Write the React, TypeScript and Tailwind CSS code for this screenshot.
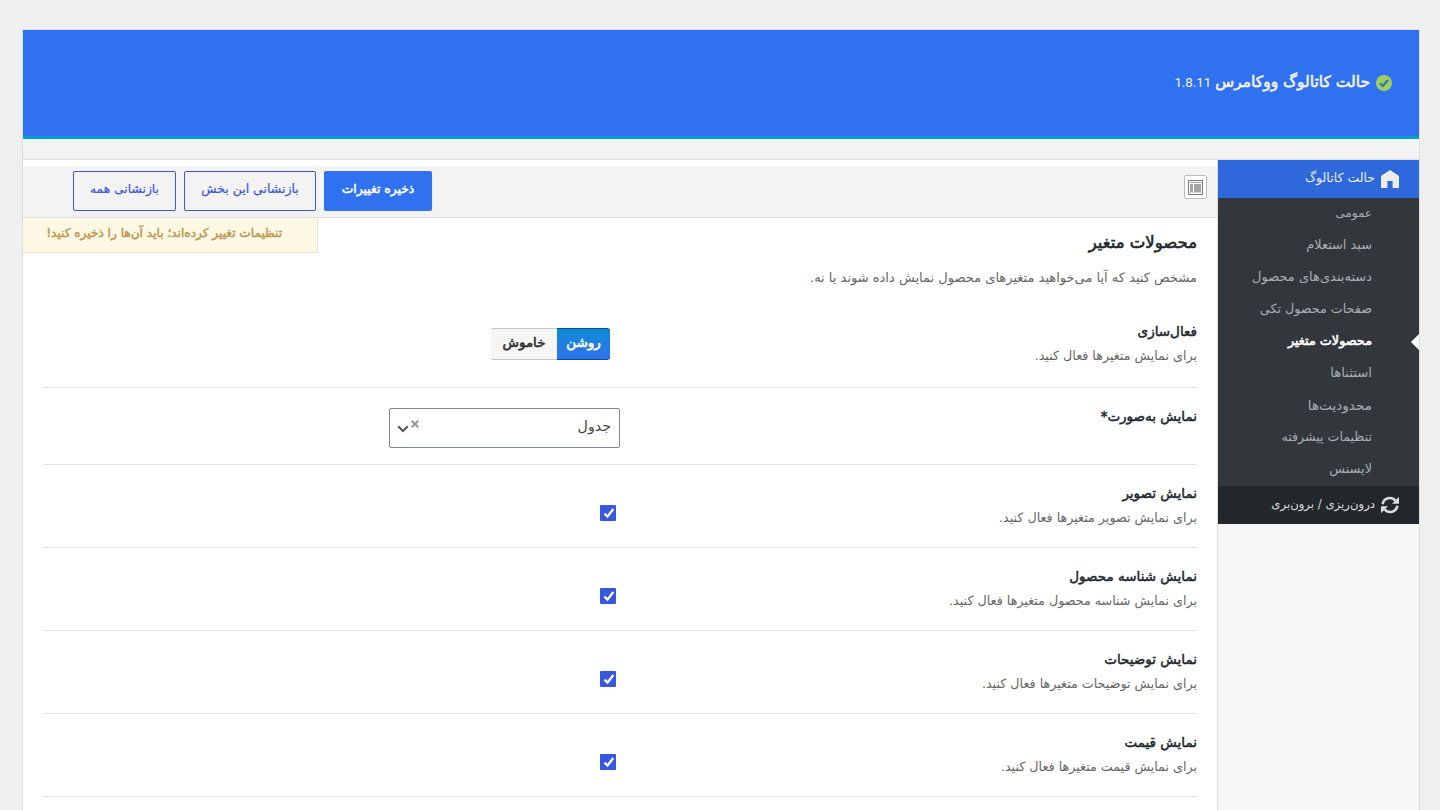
import type { ReactNode } from 'react';

const menu = [
  { label: 'عمومی', size: 'text-[12px]' },
  { label: 'سبد استعلام', size: 'text-[12.9px]' },
  { label: 'دسته‌بندی‌های محصول', size: 'text-[13px]' },
  { label: 'صفحات محصول تکی', size: 'text-[12.7px]' },
  { label: 'محصولات متغیر', size: 'text-[12.8px]', active: true },
  { label: 'استثناها', size: 'text-[13.2px]' },
  { label: 'محدودیت‌ها', size: 'text-[13.6px]' },
  { label: 'تنظیمات پیشرفته', size: 'text-[12.6px]' },
  { label: 'لایسنس', size: 'text-[12.9px]' },
];

const checks = [
  { title: 'نمایش تصویر', desc: 'برای نمایش تصویر متغیرها فعال کنید.' },
  { title: 'نمایش شناسه محصول', desc: 'برای نمایش شناسه محصول متغیرها فعال کنید.' },
  { title: 'نمایش توضیحات', desc: 'برای نمایش توضیحات متغیرها فعال کنید.' },
  { title: 'نمایش قیمت', desc: 'برای نمایش قیمت متغیرها فعال کنید.' },
];

function Row({ title, desc, height, children }: {
  title: string;
  desc?: string;
  height: string;
  children: ReactNode;
}) {
  return (
    <div className={`flex border-b border-[#e3e3e3] ${height}`}>
      <div className="w-[577px] shrink-0 pt-[16px]">
        <h3 className="text-[13.5px] leading-[25px] text-[#23282d] [-webkit-text-stroke:0.5px]">{title}</h3>
        {desc && (
          <p className="text-[12.7px] leading-[24px] text-[#666]">{desc}</p>
        )}
      </div>
      <div className="flex-1">{children}</div>
    </div>
  );
}

export default function App() {
  return (
    <div
      dir="rtl"
      className="h-[810px] overflow-hidden bg-[#efefef] px-[20px] pt-[29px] font-['DejaVu_Sans',sans-serif] whitespace-nowrap"
    >
      <div className="mr-0 ml-[2px] h-[900px] border border-[#dedede] bg-[#f3f3f3]">

        {/* HEADER */}
        <header className="flex h-[109px] items-start border-b-[3px] border-[#00a0d2] bg-[#3071ef] pt-[40px] pr-[27px]">
          <svg className="mt-[5px] size-4 shrink-0" viewBox="0 0 16 16">
            <circle cx="8" cy="8" r="8" fill="#a0cf5b" />
            <path d="M4 8.300l2.800 2.700L12 5" fill="none" stroke="#2f6fc0" strokeWidth="2.200" />
          </svg>
          <h1 className="mr-[6px] text-[15.5px] leading-[25px] text-[#f1f1f1] [-webkit-text-stroke:0.6px]">
            حالت کاتالوگ ووکامرس
          </h1>
          <span className="mr-[4px] font-['Roboto',sans-serif] text-[13.3px] leading-[26px] text-[#f1f1f1]">
            1.8.11
          </span>
        </header>

        <div className="h-[21px] border-b border-[#dedede]" />

        <div className="flex h-[770px]">

          {/* SIDEBAR */}
          <aside className="w-[201px] shrink-0 bg-[#f7f7f7]">
            <div className="flex h-[38px] items-center bg-[#2e68da] pr-[20px] text-[#ececec]">
              <svg className="size-[18px]" viewBox="0 0 18 18" fill="#ececec">
                <path d="M9 0L18 6V18H11.600V11H6.400V18H0V6Z" />
              </svg>
              <span className="mr-[6px] pb-[2px] text-[12.5px] leading-[20px]">حالت کاتالوگ</span>
            </div>
            <ul className="h-[288px] bg-[#32373c] text-[#a9adb2]">
              {menu.map((item) => (
                <li
                  key={item.label}
                  className={`relative h-[32px] pr-[47px] leading-[30px] ${item.size} ${item.active ? 'text-white [-webkit-text-stroke:0.6px]' : ''}`}
                >
                  {item.label}
                  {item.active && (
                    <span className="absolute top-[8px] right-0 border-y-8 border-r-8 border-y-transparent border-r-white" />
                  )}
                </li>
              ))}
            </ul>
            <div className="flex h-[38px] items-center bg-[#23282d] pr-[20px] text-[#dcdcdc]">
              <svg className="size-[18px]" viewBox="0 0 18 18" fill="none" stroke="#dcdcdc" strokeWidth="2.5">
                <path d="M1.6 8.2A7.2 7.2 0 0 1 14.4 4.8M16.4 9.8A7.2 7.2 0 0 1 3.6 13.2" />
                <path d="M18 0.8V7.8H11ZM0 17.2V10.2H7Z" fill="#dcdcdc" stroke="none" />
              </svg>
              <span className="mr-[6px] pb-[2px] text-[11.7px] leading-[20px]">درون‌ریزی / برون‌بری</span>
            </div>
          </aside>

          <main className="flex-1 border-r border-[#dedede] bg-white pt-[6px]">

            {/* TOOLBAR */}
            <div className="flex h-[52px] items-start justify-between border-b border-[#dedede] bg-[#f3f3f3] pt-[5px] pr-[10px] pl-[50px]">
              <button className="mt-[4px] flex h-[24px] w-[23px] items-center justify-center rounded-[2px] border border-[#bdbdbd] bg-white">
                <svg className="size-[15px]" viewBox="0 0 15 15">
                  <path d="M.5.5h14v14H.5z" fill="#fff" stroke="#777" />
                  <path d="M2 2h11v1H2zM2 4h3v8H2zM6 4h7v8H6zM2 12.500h11v.5H2z" fill="#a5a5a5" />
                </svg>
              </button>
              <div className="flex gap-[8px] text-[#3858e0]">
                <button className="h-[40px] w-[108px] rounded-[2px] bg-[#3071ef] pb-[3px] text-[12.3px] text-white [-webkit-text-stroke:0.5px]">
                  ذخیره تغییرات
                </button>
                <button className="h-[40px] w-[132px] rounded-[2px] border border-[#3858e0] pb-[3px] text-[12.5px] [-webkit-text-stroke:0.2px]">
                  بازنشانی این بخش
                </button>
                <button className="h-[40px] w-[103px] rounded-[2px] border border-[#3858e0] pb-[3px] text-[12.3px] [-webkit-text-stroke:0.2px]">
                  بازنشانی همه
                </button>
              </div>
            </div>

            <div className="flex h-[85px] items-start justify-between pr-[20px]">
              <div className="pt-[12px]">
                <h2 className="text-[16.5px] leading-[26px] text-[#23282d] [-webkit-text-stroke:0.6px]">محصولات متغیر</h2>
                <p className="mt-[10px] text-[13px] leading-[24px] text-[#666]">
                  مشخص کنید که آیا می‌خواهید متغیرهای محصول نمایش داده شوند یا نه.
                </p>
              </div>
              <div className="h-[35px] w-[295px] border-r border-b border-[#e6e3d2] bg-[#fcf8e3] pr-[35px] text-[12.1px] leading-[31px] text-[#c09853] [-webkit-text-stroke:0.5px]">
                تنظیمات تغییر کرده‌اند؛ باید آن‌ها را ذخیره کنید!
              </div>
            </div>

            {/* FIELDS */}
            <div className="px-[20px]">
              <Row title="فعال‌سازی" desc="برای نمایش متغیرها فعال کنید." height="h-[85px]">
                <div className="mt-[25px] mr-[10px] flex h-[32px] w-[119px] text-center text-[13.5px] leading-[27px] [-webkit-text-stroke:0.6px]">
                  <span className="w-[53px] rounded-r-[3px] border-y border-[#0b4f87] bg-linear-to-b from-[#0a8bd3] to-[#3071ef] text-white">
                    روشن
                  </span>
                  <span className="w-[66px] rounded-l-[3px] border-y border-[#c6c6c6] bg-[#f5f5f5] text-[#333]">
                    خاموش
                  </span>
                </div>
              </Row>
              <Row title="نمایش به‌صورت*" height="h-[77px]">
                <div className="mt-[20px] flex h-[40px] w-[231px] items-center rounded-[2px] border border-[#7e8993] pr-[8px] pl-[7px]">
                  <span className="flex-1 pb-[2px] text-[14.2px] text-[#444]">جدول</span>
                  <svg className="mb-[8px] size-[8px]" viewBox="0 0 8 8" stroke="#999" strokeWidth="2.200">
                    <path d="M.8.8l6.400 6.400M7.200.8L.8 7.200" />
                  </svg>
                  <svg className="mt-[1px] mr-[2px] h-[8px] w-[12px]" viewBox="0 0 12 8" fill="none" stroke="#555" strokeWidth="2">
                    <path d="M1.200 1.200L6 6l4.800-4.800" />
                  </svg>
                </div>
              </Row>
              {checks.map((c) => (
                <Row key={c.title} title={c.title} desc={c.desc} height="h-[83px]">
                  <div className="mt-[40px] mr-[4px] size-4 rounded-[1px] bg-[#3858e0]">
                    <svg className="size-4" viewBox="0 0 16 16" fill="none" stroke="#fff" strokeWidth="2.300">
                      <path d="M4.500 8.600l3 3L13.300 4" />
                    </svg>
                  </div>
                </Row>
              ))}
            </div>

          </main>
        </div>
      </div>
    </div>
  );
}
